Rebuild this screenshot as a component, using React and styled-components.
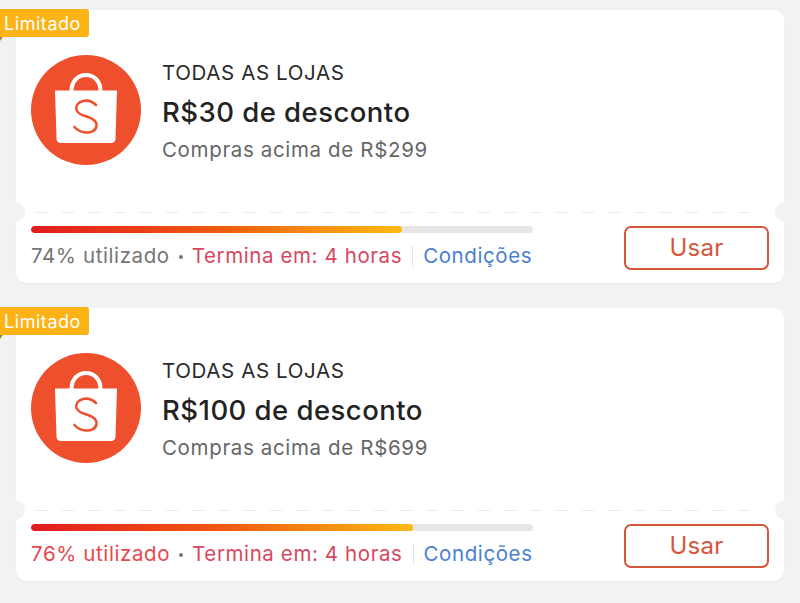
import styled, { createGlobalStyle } from "styled-components";

const vouchers = [
  { valor: "R$30", minimo: "R$299", usado: 74, alerta: false },
  { valor: "R$100", minimo: "R$699", usado: 76, alerta: true },
];

const GlobalStyle = createGlobalStyle`
  html, body {
    margin: 0;
    background: #f2f2f2;
  }
  body {
    font-family: Inter, "Liberation Sans", sans-serif;
    -webkit-font-smoothing: antialiased;
  }
`;

const ShopeeLogo = () => (
  <LogoSvg viewBox="0 0 110 110" aria-hidden="true">
    <circle cx="55" cy="55" r="55" fill="#ee4f2c" />
    <path
      d="M40.500 36 C40.500 26 47 20 55 20 C63 20 69.500 26 69.500 36"
      fill="none"
      stroke="#fff"
      strokeWidth="4"
    />
    <path
      d="M24 35.500 H86 L84.500 84 C84.400 86.500 82.500 88 80 88 H30 C27.500 88 25.600 86.500 25.500 84 Z"
      fill="#fff"
    />
    <path
      d="M65 50 C61 46 56 45 52 46 C47 47.300 44.500 51 45.500 55 C46.800 59.500 52.500 60.500 57 62 C62.500 63.800 66 66.500 65.500 71 C65 75.500 60 78 54.500 77.500 C50 77 46 75 43.500 72"
      fill="none"
      stroke="#ee4f2c"
      strokeWidth="2.600"
      strokeLinecap="round"
    />
  </LogoSvg>
);

const Voucher = ({ valor, minimo, usado, alerta }) => (
  <Card>
    <Badge>Limitado</Badge>
    <Top>
      <ShopeeLogo />
      <Info>
        <Loja>TODAS AS LOJAS</Loja>
        <Desconto>{valor} de desconto</Desconto>
        <Minimo>Compras acima de {minimo}</Minimo>
      </Info>
    </Top>
    <Picote />
    <Notch $side="left" />
    <Notch $side="right" />
    <Bottom>
      <Status>
        <Track>
          <Fill style={{ width: `${usado}%` }} />
        </Track>
        <Meta>
          <Usado $alerta={alerta}>{usado}% utilizado</Usado>
          <Dot />
          <Prazo>Termina em: 4 horas</Prazo>
          <Divider />
          <Condicoes>Condições</Condicoes>
        </Meta>
      </Status>
      <Botao>Usar</Botao>
    </Bottom>
  </Card>
);

export default function App() {
  return (
    <>
      <GlobalStyle />
      <Page>
        {vouchers.map((v) => (
          <Voucher key={v.valor} {...v} />
        ))}
      </Page>
    </>
  );
}

const Page = styled.main`
  display: flex;
  flex-direction: column;
  gap: 25px;
  padding: 10px 16px 22px;
  height: 603px;
  box-sizing: border-box;
  overflow: hidden;
`;

const Card = styled.article`
  position: relative;
  height: 273px;
  flex: none;
  background: #fff;
  border-radius: 10px;
  box-shadow: 0 1px 2px rgba(0, 0, 0, 0.05);
`;

const Badge = styled.span`
  position: absolute;
  left: -16px;
  top: -1px;
  width: 89px;
  height: 28px;
  box-sizing: border-box;
  padding-left: 4px;
  display: flex;
  align-items: center;
  background: #fcb316;
  color: #fff;
  font-size: 18px;
  letter-spacing: 0.55px;
  border-radius: 0 3px 3px 0;

  &::after {
    content: "";
    position: absolute;
    left: 0;
    top: 28px;
    width: 3px;
    height: 4px;
    background: #a98a2a;
    clip-path: polygon(0 0, 100% 0, 0 100%);
  }
`;

const Top = styled.div`
  height: 202px;
  box-sizing: border-box;
  padding: 45px 15px 0;
  display: flex;
  align-items: flex-start;
  gap: 21px;
`;

const LogoSvg = styled.svg`
  width: 110px;
  height: 110px;
  flex: none;
`;

const Info = styled.div`
  display: flex;
  flex-direction: column;
  padding-top: 6px;
`;

const Loja = styled.div`
  font-size: 20.5px;
  line-height: 24px;
  letter-spacing: 0.62px;
  color: #2a2a2a;
`;

const Desconto = styled.div`
  margin-top: 11px;
  font-size: 27.5px;
  line-height: 32px;
  letter-spacing: 0.46px;
  font-weight: 500;
  color: #222;
`;

const Minimo = styled.div`
  margin-top: 9px;
  font-size: 20.5px;
  line-height: 26px;
  letter-spacing: 0.65px;
  color: #666;
`;

const Picote = styled.div`
  height: 1px;
  margin: 0 20px;
  background: repeating-linear-gradient(90deg, #ebebeb 0 12px, transparent 12px 26px);
`;

const Notch = styled.span`
  position: absolute;
  top: 192px;
  ${(p) => p.$side}: -11px;
  width: 20px;
  height: 20px;
  border-radius: 50%;
  background: #f2f2f2;
`;

const Bottom = styled.div`
  padding: 13px 15px 0;
  display: flex;
  justify-content: space-between;
  align-items: flex-start;
`;

const Status = styled.div`
  width: 502px;
`;

const Track = styled.div`
  height: 7px;
  border-radius: 4px;
  background: #e6e6e6;
  overflow: hidden;
`;

const Fill = styled.div`
  height: 100%;
  border-radius: 4px;
  background: linear-gradient(90deg, #e21b1f 0%, #f0590f 50%, #fdb913 100%);
`;

const Meta = styled.div`
  margin-top: 10px;
  display: flex;
  align-items: center;
  white-space: nowrap;
  font-size: 20.5px;
  line-height: 26px;
  letter-spacing: 0.6px;
`;

const Usado = styled.span`
  color: ${(p) => (p.$alerta ? "#e5484d" : "#757575")};
`;

const Dot = styled.span`
  width: 4px;
  height: 4px;
  margin: 2px 9px 0;
  border-radius: 50%;
  background: #777;
`;

const Prazo = styled.span`
  color: #d9465f;
`;

const Divider = styled.span`
  width: 1px;
  height: 21px;
  margin: 0 10px;
  background: #e2e2e2;
`;

const Condicoes = styled.span`
  color: #4a7fd0;
`;

const Botao = styled.button`
  width: 145px;
  height: 44px;
  box-sizing: border-box;
  padding: 0 0 2px;
  background: #fff;
  border: 2px solid #d5573b;
  border-radius: 7px;
  color: #d5573b;
  font-family: inherit;
  font-size: 24px;
  letter-spacing: 0.3px;
  cursor: pointer;
`;
